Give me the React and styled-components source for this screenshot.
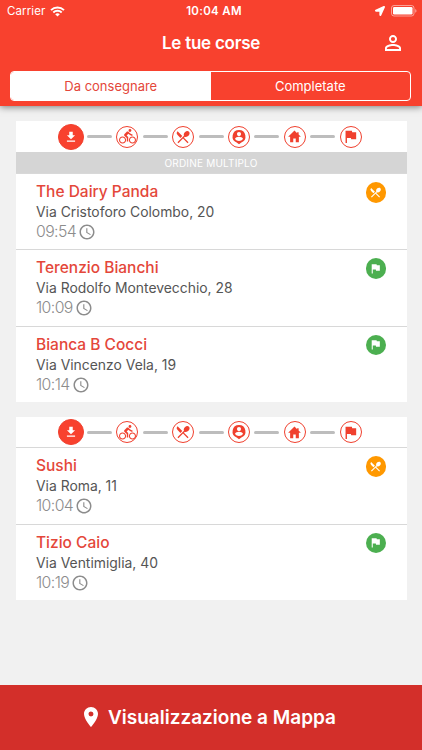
import React from 'react';
import styled, { createGlobalStyle } from 'styled-components';
import { FaLocationArrow } from 'react-icons/fa';
import {
	MdAccessTime,
	MdDirectionsBike,
	MdFileDownload,
	MdFlag,
	MdPersonOutline,
	MdPlace,
	MdRestaurantMenu,
} from 'react-icons/md';

const GlobalStyle = createGlobalStyle`
	* {
		box-sizing: border-box;
	}
	body {
		margin: 0;
		background-color: #f1f1f1;
		font-family: Inter, Roboto, 'Liberation Sans', sans-serif;
	}
	svg {
		display: block;
		flex-shrink: 0;
	}
`;

const Screen = styled.div`
	display: flex;
	flex-direction: column;
	height: 750px;
	overflow: hidden;
	background-color: #f1f1f1;
`;

const Header = styled.header`
	height: 106px;
	flex-shrink: 0;
	background-color: #f8412e;
	box-shadow: 0 1px 7px rgba(0, 0, 0, 0.5);
	color: #ffffff;
`;

const StatusBar = styled.div`
	display: grid;
	grid-template-columns: 1fr auto 1fr;
	align-items: center;
	height: 22px;
	padding: 0 5px 0 7px;
	font-size: 11.5px;
`;

const Carrier = styled.div`
	display: flex;
	align-items: center;
	gap: 5px;
	letter-spacing: 0.1px;
`;

const Clock = styled.span`
	padding-left: 4px;
	font-weight: 600;
	letter-spacing: 0.3px;
`;

const StatusIcons = styled.div`
	display: flex;
	justify-content: flex-end;
	align-items: center;
	gap: 6px;
`;

const TitleBar = styled.div`
	display: grid;
	grid-template-columns: 1fr auto 1fr;
	align-items: center;
	height: 42px;
`;

const Title = styled.h1`
	grid-column: 2;
	margin: 0;
	font-size: 17px;
	font-weight: 600;
	letter-spacing: -0.25px;
	white-space: nowrap;
`;

const ProfileButton = styled.button`
	justify-self: end;
	margin-right: 17px;
	padding: 0;
	border: none;
	background: none;
	color: #ffffff;
`;

const Segments = styled.div`
	display: flex;
	height: 30px;
	margin: 7px 11px 0 10px;
	overflow: hidden;
	border: 1px solid #ffffff;
	border-radius: 4px;
`;

const Segment = styled.button`
	flex: 1;
	padding: 0;
	border: none;
	background-color: ${(props) => (props.$active ? '#ffffff' : 'transparent')};
	color: ${(props) => (props.$active ? '#e4473a' : '#ffffff')};
	font-family: inherit;
	font-size: 13px;
`;

const List = styled.main`
	display: flex;
	flex-direction: column;
	flex: 1;
	gap: 15px;
	padding: 15px 15.5px 0;
`;

const Card = styled.section`
	background-color: #ffffff;
`;

const Steps = styled.div`
	display: flex;
	justify-content: center;
	align-items: center;
	height: ${(props) => (props.$short ? 30.4 : 31)}px;
`;

const Step = styled.div`
	display: flex;
	justify-content: center;
	align-items: center;
	width: ${(props) => (props.$active ? 26 : 22)}px;
	height: ${(props) => (props.$active ? 26 : 22)}px;
	margin: 0 ${(props) => (props.$active ? -2 : 0)}px;
	border: 1px solid #f0402e;
	border-radius: 50%;
	background-color: ${(props) => (props.$active ? '#f8412e' : '#ffffff')};
	color: ${(props) => (props.$active ? '#ffffff' : '#f0402e')};
`;

const StepLine = styled.div`
	width: 25px;
	height: 3px;
	margin: 0 4.45px;
	border-radius: 1.5px;
	background-color: #bdbdbd;
`;

const MultipleLabel = styled.div`
	display: flex;
	justify-content: center;
	align-items: center;
	height: 21px;
	padding-top: 1px;
	background-color: #d5d5d5;
	color: #ffffff;
	font-size: 10px;
	letter-spacing: 0.2px;
`;

const Order = styled.article`
	display: flex;
	justify-content: space-between;
	height: 76.3px;
	padding: 8px 20.5px 0;
	border-top: 1px solid #d8d8d8;
`;

const Name = styled.h2`
	margin: 0;
	color: #e4473a;
	font-size: 15.5px;
	font-weight: 500;
	line-height: 20px;
`;

const Address = styled.div`
	color: #555555;
	font-size: 13.9px;
	line-height: 20px;
`;

const Time = styled.div`
	display: flex;
	align-items: center;
	gap: 2px;
	color: #8c8c8c;
	font-size: 15.8px;
	font-weight: 300;
	letter-spacing: -0.6px;
	line-height: 20px;
`;

const Badge = styled.div`
	display: flex;
	justify-content: center;
	align-items: center;
	width: 20.5px;
	height: 20.5px;
	border-radius: 50%;
	background-color: ${(props) => (props.$pickup ? '#ff9800' : '#4caf50')};
	color: #ffffff;
`;

const MapButton = styled.button`
	display: flex;
	justify-content: center;
	align-items: center;
	gap: 5px;
	height: 65.5px;
	flex-shrink: 0;
	padding: 0 7px 0 0;
	border: none;
	background-color: #d32f2a;
	color: #ffffff;
	font-family: inherit;
	font-size: 19px;
	font-weight: 600;
`;

const WifiIcon = () => (
	<svg width="15" height="11" viewBox="0 0 15 11" fill="none" stroke="#fff" strokeWidth="1.9">
		<path d="M1 4.1a9.3 9.3 0 0 1 13 0" />
		<path d="M3.3 6.5a6 6 0 0 1 8.4 0" />
		<path d="M7.5 10.6 5.2 8.3a3.3 3.3 0 0 1 4.6 0z" fill="#fff" stroke="none" />
	</svg>
);

const BatteryIcon = () => (
	<svg width="26" height="12" viewBox="0 0 26 12">
		<rect x="0.5" y="0.5" width="22.5" height="10.5" rx="2.5" fill="none" stroke="#fff" strokeOpacity="0.5" />
		<rect x="2" y="2" width="19.5" height="7.5" rx="1.2" fill="#fff" />
		<path d="M24.2 4v3.8c1.8-.6 1.8-3.2 0-3.8z" fill="#fff" fillOpacity="0.5" />
	</svg>
);

const HomeIcon = ({ size }) => (
	<svg width={size} height={size} viewBox="0 0 24 24" fill="currentColor">
		<path d="M12 2.5 1.8 12.4H5V21h5v-6h4v6h5v-8.6h3.2L18.6 8.9V5h-2.4v1.6z" />
	</svg>
);

const PersonPinIcon = ({ size }) => (
	<svg width={size} height={size} viewBox="0 0 24 24" fill="currentColor" fillRule="evenodd">
		<path d="M12 1.5a9.8 9.8 0 0 0-3.5 18.9L12 23l3.5-2.6A9.8 9.8 0 0 0 12 1.5zm0 3a3.1 3.1 0 1 1 0 6.2 3.1 3.1 0 0 1 0-6.2zM6 14.9c0-2 4-3.1 6-3.1s6 1.1 6 3.1a7.2 7.2 0 0 1-12 0z" />
	</svg>
);

const steps = [
	{ Icon: MdFileDownload, size: 14 },
	{ Icon: MdDirectionsBike, size: 17 },
	{ Icon: MdRestaurantMenu, size: 16 },
	{ Icon: PersonPinIcon, size: 16 },
	{ Icon: HomeIcon, size: 15 },
	{ Icon: MdFlag, size: 17 },
];

const groups = [
	{
		multiple: true,
		orders: [
			{ name: 'The Dairy Panda', address: 'Via Cristoforo Colombo, 20', time: '09:54', pickup: true },
			{ name: 'Terenzio Bianchi', address: 'Via Rodolfo Montevecchio, 28', time: '10:09' },
			{ name: 'Bianca B Cocci', address: 'Via Vincenzo Vela, 19', time: '10:14' },
		],
	},
	{
		orders: [
			{ name: 'Sushi', address: 'Via Roma, 11', time: '10:04', pickup: true },
			{ name: 'Tizio Caio', address: 'Via Ventimiglia, 40', time: '10:19' },
		],
	},
];

const StepTrack = ({ short }) => (
	<Steps $short={short}>
		{steps.map(({ Icon, size }, index) => (
			<React.Fragment key={index}>
				{index > 0 && <StepLine />}
				<Step $active={index === 0}>
					<Icon size={size} />
				</Step>
			</React.Fragment>
		))}
	</Steps>
);

const OrderRow = ({ name, address, time, pickup }) => (
	<Order>
		<div>
			<Name>{name}</Name>
			<Address>{address}</Address>
			<Time>
				{time}
				<MdAccessTime size={18} />
			</Time>
		</div>
		<Badge $pickup={pickup}>{pickup ? <MdRestaurantMenu size={13} /> : <MdFlag size={13} />}</Badge>
	</Order>
);

const App = () => {
	return (
		<Screen>
			<GlobalStyle />
			<Header>
				<StatusBar>
					<Carrier>
						Carrier
						<WifiIcon />
					</Carrier>
					<Clock>10:04 AM</Clock>
					<StatusIcons>
						<FaLocationArrow size={10} />
						<BatteryIcon />
					</StatusIcons>
				</StatusBar>
				<TitleBar>
					<Title>Le tue corse</Title>
					<ProfileButton>
						<MdPersonOutline size={24} />
					</ProfileButton>
				</TitleBar>
				<Segments>
					<Segment $active>Da consegnare</Segment>
					<Segment>Completate</Segment>
				</Segments>
			</Header>
			<List>
				{groups.map((group, index) => (
					<Card key={index}>
						<StepTrack short={!group.multiple} />
						{group.multiple && <MultipleLabel>ORDINE MULTIPLO</MultipleLabel>}
						{group.orders.map((order) => (
							<OrderRow key={order.name} {...order} />
						))}
					</Card>
				))}
			</List>
			<MapButton>
				<MdPlace size={24} />
				Visualizzazione a Mappa
			</MapButton>
		</Screen>
	);
};

export default App;
